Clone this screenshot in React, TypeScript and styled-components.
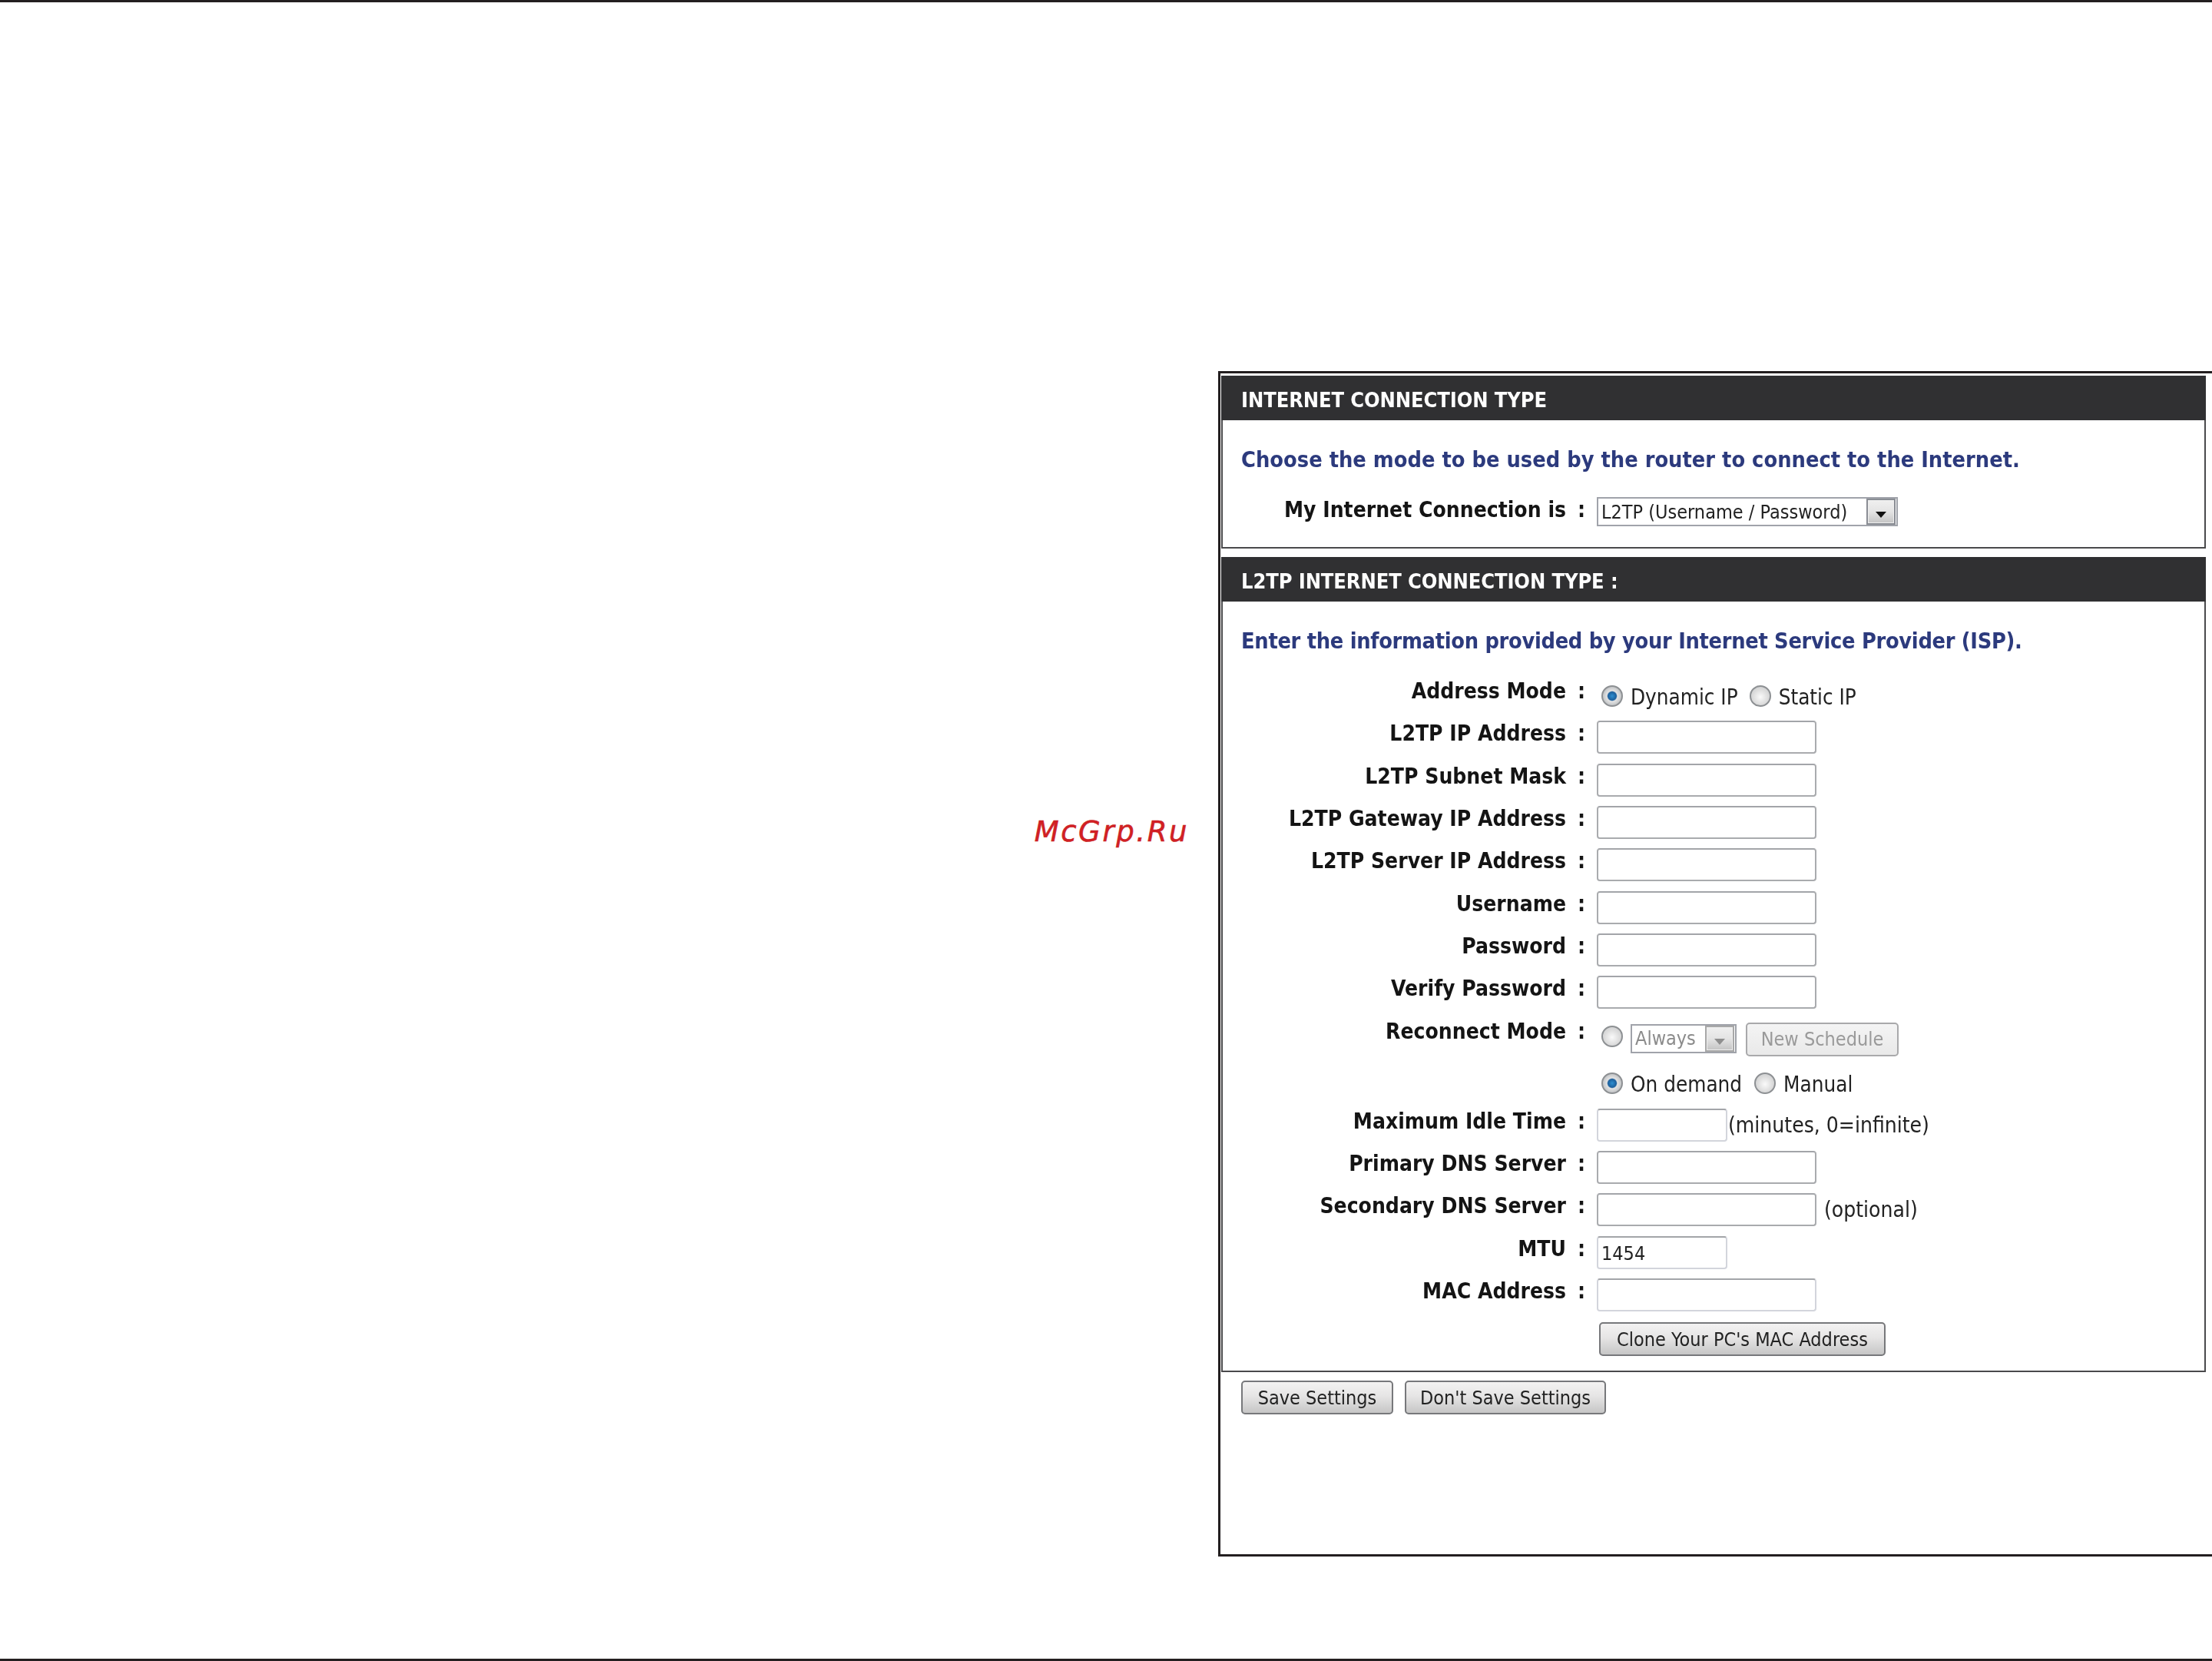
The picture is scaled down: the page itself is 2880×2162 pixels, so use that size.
import React from 'react';
import styled, { createGlobalStyle } from 'styled-components';

const Global = createGlobalStyle`
  html, body { margin: 0; padding: 0; background: #fff; }
  * { box-sizing: border-box; }
`;

const tahoma = `"DejaVu Sans Condensed", "DejaVu Sans", sans-serif`;

const Page = styled.div`
  width: 2880px;
  height: 2162px;
  display: flex;
  flex-direction: column;
  justify-content: space-between;
  overflow: hidden;
  font-family: ${tahoma};
`;

const Rule = styled.div`
  height: 3px;
  background: #231f20;
`;

const Middle = styled.div`
  flex: 1;
  display: flex;
  justify-content: flex-end;
  align-items: flex-start;
  padding-top: 480px;
`;

const Watermark = styled.div`
  margin: 578px 38px 0 0;
  font: italic 37px/44px "DejaVu Sans", sans-serif;
  letter-spacing: 2.6px;
  color: #d21f24;
  -webkit-text-stroke: 0.6px #c81f24;
`;

const Frame = styled.div`
  width: 1294px;
  height: 1543px;
  border: solid #231f20;
  border-width: 3px 0 3px 3px;
  padding: 3px 8px 0 1px;
`;

// the router page is an upscaled bitmap in the original, so it reads a little soft
const Shot = styled.div`
  filter: blur(0.6px);
`;

const Box = styled.section<{ $height: number }>`
  height: ${p => p.$height}px;
  margin-bottom: 11px;
  border: 2px solid #4a4a4c;
  border-top-width: 0;
`;

const Header = styled.h2`
  margin: 0 -2px;
  height: 58px;
  padding: 4px 0 0 26px;
  display: flex;
  align-items: center;
  background: #303032;
  color: #fff;
  font-size: 27px;
  font-weight: 700;
  letter-spacing: -0.1px;
`;

const Instruction = styled.p<{ $tight?: boolean }>`
  margin: 31px 0 29px 24px;
  height: 40px;
  line-height: 40px;
  font-size: 28.7px;
  font-weight: 700;
  letter-spacing: ${p => (p.$tight ? '-0.31px' : '0')};
  color: #2c3a7d;
  white-space: nowrap;
`;

const Row = styled.div`
  display: grid;
  grid-template-columns: 447px 40px 1fr;
  min-height: 55.33px;
  color: #141414;
`;

const Label = styled.div`
  padding-top: 1px;
  line-height: 32px;
  font-size: 28px;
  font-weight: 700;
  text-align: right;
  white-space: nowrap;
`;

const Colon = styled(Label)`
  text-align: center;
`;

const Controls = styled.div`
  display: flex;
  align-items: flex-start;
`;

const Stack = styled.div`
  display: flex;
  flex-direction: column;
  padding-bottom: 17px;
`;

const Line = styled.div<{ $top: number }>`
  display: flex;
  align-items: center;
  margin-top: ${p => p.$top}px;
  height: 32px;
  font-size: 27.6px;
  white-space: nowrap;
  color: #222;
`;

const ToolLine = styled.div`
  display: flex;
  align-items: flex-start;
  margin-top: 5px;
  height: 43px;
`;

const Radio = styled.input.attrs({ type: 'radio' })`
  appearance: none;
  flex: none;
  width: 28px;
  height: 28px;
  margin: 0 10px 0 6px;
  border-radius: 50%;
  border: 2px solid #8d9093;
  background: radial-gradient(circle at 50% 55%, #fafafa 0%, #dcdcdc 55%, #c4c6c8 100%);
  &:checked {
    background: radial-gradient(circle, #2f8fd0 0%, #1c5f9c 32%, #e4e4e4 40%, #c4c6c8 70%, #9a9c9e 100%);
  }
`;

const RadioText = styled.span<{ $gap?: number }>`
  margin-right: ${p => p.$gap ?? 0}px;
  padding-top: 3px;
`;

const Field = styled.input<{ $small?: boolean; $light?: boolean }>`
  display: block;
  width: ${p => (p.$small ? 170 : 286)}px;
  height: 43px;
  padding: 3px 4px 0;
  border: 2px solid ${p => (p.$light ? '#d3d5dc' : '#a9abae')};
  border-top-color: #a3a5a9;
  border-radius: 4px;
  background: #fff;
  font: 25px ${tahoma};
  color: #222;
  outline: none;
`;

const Hint = styled.span<{ $gap: number }>`
  margin: 6px 0 0 ${p => p.$gap}px;
  line-height: 32px;
  font-size: 28px;
  color: #222;
  white-space: nowrap;
`;

const SelectBox = styled.div<{ $width: number; $off?: boolean }>`
  display: flex;
  align-items: center;
  justify-content: space-between;
  width: ${p => p.$width}px;
  height: 38px;
  padding: 0 2px 0 4px;
  border: 2px solid #a0a3aa;
  font-size: 25px;
  background: #fff;
  color: ${p => (p.$off ? '#8b8b8b' : '#222')};
  white-space: nowrap;
`;

const SelectArrow = styled.span<{ $off?: boolean }>`
  flex: none;
  width: 36px;
  height: 32px;
  display: flex;
  align-items: center;
  justify-content: center;
  padding-top: 8px;
  border: 2px solid #eee;
  outline: 2px solid ${p => (p.$off ? '#a8a8a8' : '#8a8d94')};
  outline-offset: -1px;
  background: linear-gradient(#efefef, #e4e4e4 50%, #c6c6c6);
  &::after {
    content: '';
    border: 7px solid transparent;
    border-bottom-width: 0;
    border-top: 8px solid ${p => (p.$off ? '#8f8f8f' : '#111')};
  }
`;

const Button = styled.button<{ $width: number; $left?: number }>`
  flex: none;
  width: ${p => p.$width}px;
  height: 44px;
  margin-left: ${p => p.$left ?? 0}px;
  padding: 0;
  border: 2px solid #77787b;
  border-radius: 5px;
  background: linear-gradient(#f3f2f2, #e6e5e5 45%, #c6c6c6);
  font: 25px ${tahoma};
  color: #222;
  white-space: nowrap;
  &:disabled {
    border-color: #a9a9ab;
    background: linear-gradient(#f4f4f4, #e9e9e9);
    color: #9a9a9a;
  }
`;

const Actions = styled.div`
  display: flex;
  padding-left: 26px;
  gap: 15px;
`;

const FormField: React.FC<{ label: string; children?: React.ReactNode }> = ({ label, children }) => (
  <Row>
    <Label>{label}</Label>
    <Colon>{label ? ':' : ''}</Colon>
    <Controls>{children}</Controls>
  </Row>
);

export default function App() {
  return (
    <Page>
      <Global />
      <Rule />
      <Middle>
        <Watermark>McGrp.Ru</Watermark>
        <Frame>
          <Shot>
            <Box $height={225}>
              <Header>INTERNET CONNECTION TYPE</Header>
              <Instruction>Choose the mode to be used by the router to connect to the Internet.</Instruction>
              <FormField label="My Internet Connection is">
                <SelectBox $width={392}>
                  L2TP (Username / Password)
                  <SelectArrow />
                </SelectBox>
              </FormField>
            </Box>
            <Box $height={1061}>
              <Header>L2TP INTERNET CONNECTION TYPE :</Header>
              <Instruction $tight>Enter the information provided by your Internet Service Provider (ISP).</Instruction>
              <FormField label="Address Mode">
                <Line $top={7}>
                  <Radio name="mode" defaultChecked />
                  <RadioText $gap={9}>Dynamic IP</RadioText>
                  <Radio name="mode" />
                  <RadioText>Static IP</RadioText>
                </Line>
              </FormField>
              <FormField label="L2TP IP Address"><Field /></FormField>
              <FormField label="L2TP Subnet Mask"><Field /></FormField>
              <FormField label="L2TP Gateway IP Address"><Field /></FormField>
              <FormField label="L2TP Server IP Address"><Field /></FormField>
              <FormField label="Username"><Field /></FormField>
              <FormField label="Password"><Field /></FormField>
              <FormField label="Verify Password"><Field /></FormField>
              <FormField label="Reconnect Mode">
                <Stack>
                  <ToolLine>
                    <Radio name="reconnect" style={{ marginTop: 4 }} />
                    <SelectBox $width={138} $off style={{ marginTop: 2 }}>
                      Always
                      <SelectArrow $off />
                    </SelectBox>
                    <Button $width={199} $left={12} disabled>New Schedule</Button>
                  </ToolLine>
                  <Line $top={20}>
                    <Radio name="demand" defaultChecked />
                    <RadioText $gap={10}>On demand</RadioText>
                    <Radio name="demand" />
                    <RadioText>Manual</RadioText>
                  </Line>
                </Stack>
              </FormField>
              <FormField label="Maximum Idle Time">
                <Field $small $light />
                <Hint $gap={1}>(minutes, 0=infinite)</Hint>
              </FormField>
              <FormField label="Primary DNS Server"><Field /></FormField>
              <FormField label="Secondary DNS Server">
                <Field />
                <Hint $gap={10}>(optional)</Hint>
              </FormField>
              <FormField label="MTU"><Field $small $light defaultValue="1454" /></FormField>
              <FormField label="MAC Address"><Field $light /></FormField>
              <FormField label="">
                <Button $width={373} $left={3} style={{ marginTop: 2 }}>Clone Your PC's MAC Address</Button>
              </FormField>
            </Box>
            <Actions>
              <Button $width={198}>Save Settings</Button>
              <Button $width={262}>Don't Save Settings</Button>
            </Actions>
          </Shot>
        </Frame>
      </Middle>
      <Rule />
    </Page>
  );
}
